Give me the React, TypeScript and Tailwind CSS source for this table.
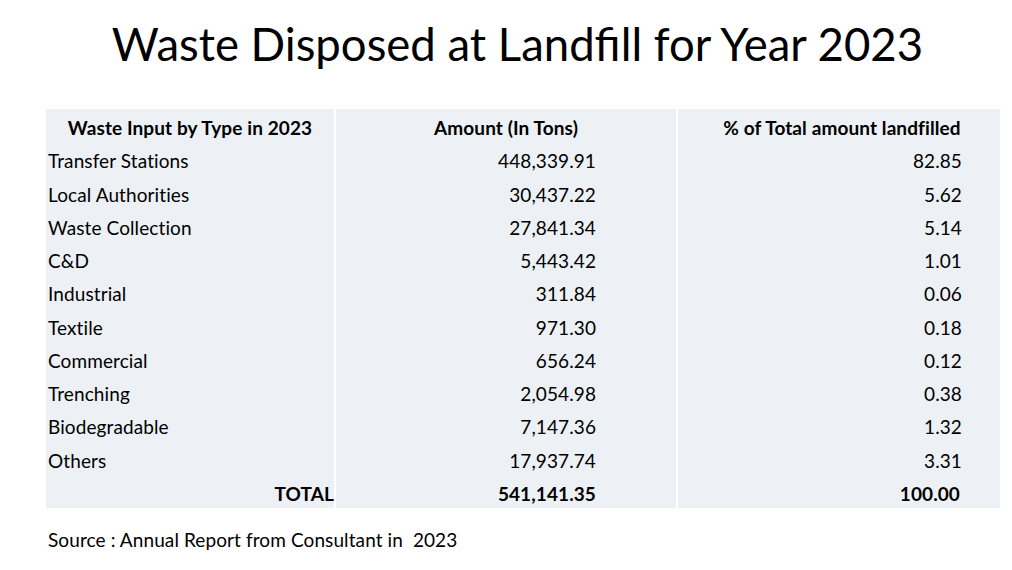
const rows: [string, string, string][] = [
  ["Transfer Stations", "448,339.91", "82.85"],
  ["Local Authorities", "30,437.22", "5.62"],
  ["Waste Collection", "27,841.34", "5.14"],
  ["C&D", "5,443.42", "1.01"],
  ["Industrial", "311.84", "0.06"],
  ["Textile", "971.30", "0.18"],
  ["Commercial", "656.24", "0.12"],
  ["Trenching", "2,054.98", "0.38"],
  ["Biodegradable", "7,147.36", "1.32"],
  ["Others", "17,937.74", "3.31"],
]

const font = { fontFamily: "Lato, 'Open Sans', sans-serif" }

function Row({ children }: { children: React.ReactNode }) {
  return (
    <div className="grid h-[33.25px] grid-cols-[290px_342px_322px] items-stretch">
      {children}
    </div>
  )
}

export default function App() {
  return (
    <div className="h-[570px] w-[1012px] bg-white text-black" style={font}>
      <h1 className="pl-[23px] pt-[16px] text-center text-[45.5px] leading-[56px]">
        Waste Disposed at Landfill for Year 2023
      </h1>
      <div className="ml-[46px] mt-[37px] w-[954px]">
        <Row>
          <div className="flex items-center justify-center border-r-2 border-b border-white bg-[#edf1f5] pt-[5px] text-[19px] font-bold tracking-[0.1px]">
            Waste Input by Type in 2023
          </div>
          <div className="flex items-center justify-center border-r-2 border-b border-white bg-[#edf1f5] pt-[5px] text-[19px] font-bold tracking-[0.1px]">
            Amount (In Tons)
          </div>
          <div className="flex items-center justify-center border-b border-white bg-[#edf1f5] pt-[5px] pl-[6px] text-[19px] font-bold tracking-[0.1px]">
            % of Total amount landfilled
          </div>
        </Row>
        {rows.map(([name, amount, pct]) => (
          <Row key={name}>
            <div className="flex items-center border-r-2 border-b border-white bg-[#edf1f5] pt-[5px] pl-[2px] text-[19px] tracking-[0.1px]">
              {name}
            </div>
            <div className="flex items-center justify-end border-r-2 border-b border-white bg-[#edf1f5] pt-[5px] pr-[80px] text-[19px] tracking-[0.1px]">
              {amount}
            </div>
            <div className="flex items-center justify-end border-b border-white bg-[#edf1f5] pt-[5px] pr-[38px] text-[19px] tracking-[0.1px]">
              {pct}
            </div>
          </Row>
        ))}
        <Row>
          <div className="flex items-center justify-end border-r-2 border-white bg-[#edf1f5] pt-[5px] text-[19px] font-bold tracking-[0.1px]">
            TOTAL
          </div>
          <div className="flex items-center justify-end border-r-2 border-white bg-[#edf1f5] pt-[5px] pr-[80px] text-[19px] font-bold tracking-[0.1px]">
            541,141.35
          </div>
          <div className="flex items-center justify-end bg-[#edf1f5] pt-[5px] pr-[40px] text-[19px] font-bold tracking-[0.1px]">
            100.00
          </div>
        </Row>
      </div>
      <p className="ml-[48px] mt-[18px] whitespace-pre text-[19px] tracking-[0.1px]">
        {"Source : Annual Report from Consultant in  2023"}
      </p>
    </div>
  )
}
